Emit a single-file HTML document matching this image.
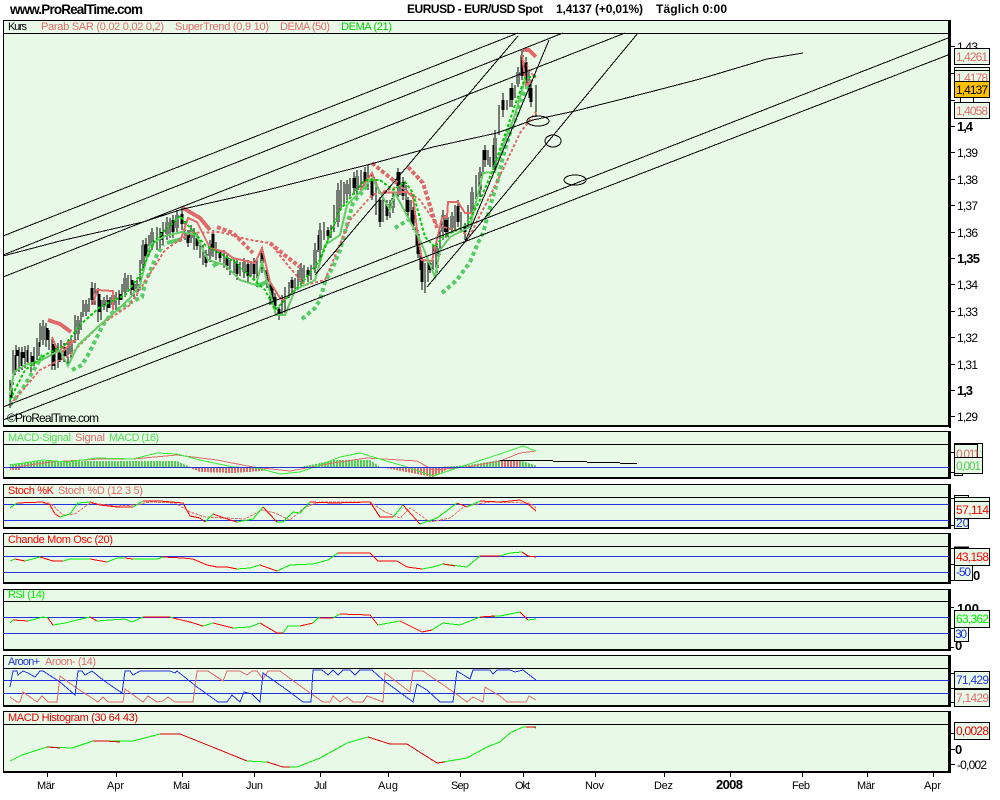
<!DOCTYPE html>
<html><head><meta charset="utf-8"><title>EURUSD</title>
<style>
html,body{margin:0;padding:0;background:#fff;width:1000px;height:800px;overflow:hidden}
svg{display:block}
text{font-family:"Liberation Sans",Arial,sans-serif;font-size:11px}
.b{font-weight:bold}
.ax{font-size:12px}
</style></head><body>
<svg width="1000" height="800" viewBox="0 0 1000 800" xmlns="http://www.w3.org/2000/svg" fill="none" shape-rendering="crispEdges">
<defs>
<pattern id="pg" width="3" height="10" patternUnits="userSpaceOnUse"><rect width="2" height="10" fill="#55cc55"/></pattern>
<pattern id="pr" width="3" height="10" patternUnits="userSpaceOnUse"><rect width="2" height="10" fill="#e06a6a"/></pattern>
</defs>
<rect width="1000" height="800" fill="#fff"/>

<!-- header -->
<g fill="#000">
<text x="10" y="14" class="b" style="font-size:13.5px" textLength="133">www.ProRealTime.com</text>
<text x="407" y="13" class="b" style="font-size:12px" textLength="136">EURUSD - EUR/USD Spot</text>
<text x="556" y="13" class="b" style="font-size:12px" textLength="87">1,4137 (+0,01%)</text>
<text x="656" y="13" class="b" style="font-size:12px" textLength="71">Täglich  0:00</text>
</g>

<!-- panels -->
<g fill="#e8f9e8" stroke="#000">
<rect x="3.5" y="20.5" width="945" height="405"/>
<rect x="3.5" y="431.5" width="945" height="46"/>
<rect x="3.5" y="484.5" width="945" height="43"/>
<rect x="3.5" y="533.5" width="945" height="49"/>
<rect x="3.5" y="589.5" width="945" height="60"/>
<rect x="3.5" y="655.5" width="945" height="50"/>
<rect x="3.5" y="711.5" width="945" height="60"/>
</g>
<g fill="#000">
<rect x="949" y="20" width="2" height="408"/><rect x="3" y="425" width="947" height="2"/>
<rect x="949" y="431" width="2" height="48"/><rect x="3" y="477" width="947" height="2"/>
<rect x="949" y="484" width="2" height="45"/><rect x="3" y="527" width="947" height="2"/>
<rect x="949" y="533" width="2" height="51"/><rect x="3" y="582" width="947" height="2"/>
<rect x="949" y="589" width="2" height="62"/><rect x="3" y="649" width="947" height="2"/>
<rect x="949" y="655" width="2" height="52"/><rect x="3" y="705" width="947" height="2"/>
<rect x="949" y="711" width="2" height="62"/><rect x="3" y="771" width="947" height="2"/>
</g>
<path stroke="#000" d="M3 33.5H949M3 444.5H949M3 497.5H949M3 546.5H949M3 601.5H949M3 668.5H949M3 724.5H949"/>

<!-- candles -->
<g>
<path stroke="#000" stroke-width="1" d="M10 380V408M13 350V385M16 345V372M19 347V372M22 347V370M25 346V368M28 345V365M31 352V372M34 347V366M37 338V360M40 323V347M43 320V345M46 323V347M49 330V350M52 337V370M55 343V370M58 343V368M61 340V360M64 343V362M68 340V367M71 336V360M75 315V343M78 316V340M81 312V330M83 300V317M86 300V316M89 298V312M92 282V305M95 283V305M98 288V322M101 300V320M104 297V310M107 295V312M110 297V308M113 290V310M116 292V310M119 290V305M122 284V300M125 273V297M128 275V292M131 275V295M134 283V297M137 280V296M140 260V290M143 240V270M146 238V262M149 235V255M152 228V250M157 227V250M160 228V248M163 222V245M167 217V240M170 218V238M173 215V238M177 210V233M182 207V230M185 222V240M188 230V247M191 225V243M194 228V250M197 233V250M200 240V258M203 245V265M206 250V267M210 240V262M213 230V257M216 242V260M220 250V262M224 250V268M227 253V270M230 258V275M234 258V275M237 260V280M240 262V276M244 258V278M248 260V282M251 262V276M254 258V280M257 257V287M262 247V273M267 267V288M270 280V305M273 288V305M275 293V310M279 307V320M282 295V315M285 287V313M289 282V298M292 277V293M295 278V292M298 270V290M301 263V287M304 265V283M308 267V282M311 265V280M315 243V273M318 235V252M320 223V260M324 222V240M328 227V240M331 225V238M334 205V232M338 183V227M341 180V208M344 182V205M347 180V200M350 178V198M354 172V195M357 170V197M361 170V190M365 167V187M368 165V190M372 173V200M376 185V215M380 197V227M383 198V222M387 200V220M390 200V218M393 193V213M398 168V197M400 172V195M403 177V200M406 185V212M408 197V217M411 200V222M413 207V230M416 222V245M418 230V258M420 240V270M422 257V290M425 263V293M428 262V282M430 260V273M433 245V270M437 243V273M440 225V255M443 210V240M446 215V238M448 217V237M452 212V232M455 205V230M458 200V227M461 212V232M465 223V240M468 205V228M472 187V217M476 175V205M480 167V197M483 150V175M485 145V167M488 150V165M490 157V167M493 145V170M495 130V173M499 105V135M503 93V117M507 100V110M510 88V107M512 83V107M515 85V98M518 67V87M522 50V80M526 57V87M529 72V98M531 83V107M536 85V117"/>
<path stroke="#000" stroke-width="3" d="M11 384V398M17 350V356M23 352V358M32 356V364M47 328V340M53 344V366M59 350V362M65 347V356M92 288V300M99 294V312M108 300V308M120 294V300M132 280V290M146 244V256M161 232V240M173 220V232M182 214V224M188 234V243M197 238V246M206 254V263M213 234V250M220 252V258M227 257V266M237 264V274M248 264V276M254 264V274M262 253V268M267 270V284M271 284V300M275 297V306M279 309V315M292 280V288M308 270V276M328 230V236M354 178V188M365 172V182M372 178V196M380 200V222M387 204V216M398 172V186M403 182V196M408 200V212M413 210V226M418 234V254M422 260V282M430 263V270M446 220V232M458 206V222M465 226V232M485 150V160M503 100V110M512 88V100M522 55V76M526 62V84M531 88V102"/>
<path stroke="#000" stroke-width="3" d="M14 355V375M20 352V366M26 350V362M38 342V356M43 326V340M71 342V354M78 320V334M86 304V312M104 300V306M113 295V305M125 278V292M137 284V292M143 245V264M152 232V246M167 222V234M177 215V228M191 230V238M210 244V256M244 262V272M301 268V282M315 250V268M320 230V250M338 190V222M347 184V194M357 176V190M393 198V208M437 248V268M443 215V232M452 216V228M472 192V212M480 172V190M495 138V165M518 72V84"/>
<path stroke="#e8f9e8" stroke-width="1" d="M14 355V375M20 352V366M26 350V362M38 342V356M43 326V340M71 342V354M78 320V334M86 304V312M104 300V306M113 295V305M125 278V292M137 284V292M143 245V264M152 232V246M167 222V234M177 215V228M191 230V238M210 244V256M244 262V272M301 268V282M315 250V268M320 230V250M338 190V222M347 184V194M357 176V190M393 198V208M437 248V268M443 215V232M452 216V228M472 192V212M480 172V190M495 138V165M518 72V84"/>

<!-- green SAR dots -->
<g stroke="#55cc66" stroke-width="4" stroke-dasharray="4 3">
<polyline points="10,405 18,395 25,385 32,373 38,363 43,355"/>
<polyline points="72,370 82,365 88,355 97,337 103,325 112,313 127,304 142,297 145,283 157,255 163,245"/>
<polyline points="167,243 182,239" stroke-dasharray="none"/>
<polyline points="213,266 218,263" stroke-dasharray="none"/>
<polyline points="257,286 267,282" stroke-dasharray="none"/>
<polyline points="302,319 315,308 320,300 325,282 333,267 340,250 353,203 368,185"/>
<polyline points="395,228 408,220"/>
<polyline points="442,293 457,280 470,262 478,243 483,233 492,200 498,180 503,157 510,133 517,115 523,96 533,77"/>
</g>
<!-- salmon SAR dots -->
<g stroke="#e06a6a" stroke-width="4" stroke-dasharray="4 2">
<polyline points="48,320 60,324 71,332" stroke-dasharray="none"/>
<polyline points="183,208 200,218 210,230" stroke-dasharray="none"/>
<polyline points="217,227 233,233 253,253"/>
<polyline points="270,243 287,257 300,267"/>
<polyline points="372,163 383,172 397,183"/>
<polyline points="408,167 423,183 435,222 437,228"/>
<polyline points="523,50 529,50 536,57" stroke-dasharray="none"/>
</g>
<!-- dema 50 dashed -->
<polyline stroke="#e06a6a" stroke-width="2" stroke-dasharray="3 2" points="10,405 40,370 70,355 100,325 130,305 165,250 190,233 220,232 250,240 270,243 290,268 305,285 325,280 350,220 372,195 400,186 420,200 437,225 470,235 497,182 520,133 536,112"/>
<polyline stroke="#e06a6a" stroke-width="1.5" stroke-dasharray="3 2" points="525,60 530,72 536,78"/>
<!-- supertrend lines -->
<polyline stroke="#e06a6a" stroke-width="2" points="52,337 58,352 68,342 74,341 62,352 55,350"/>
<polyline stroke="#e06a6a" stroke-width="2" points="93,305 97,290 113,291 113,310"/>
<polyline stroke="#e06a6a" stroke-width="2" points="180,242 188,218 197,222 210,248 225,252 233,258 255,263 262,248 270,282 280,298 285,300"/>
<polyline stroke="#e06a6a" stroke-width="2" points="360,190 372,173 380,193 407,192 413,197 418,237 422,260 432,261 442,218 447,217 448,202 458,202 465,213 473,213"/>
<polyline stroke="#e06a6a" stroke-width="2" points="522,55 526,85 533,80"/>
<!-- light green line -->
<polyline stroke="#66cc66" stroke-width="2" points="10,395 14,372 25,365 40,361 60,350 68,366 78,345 100,325 115,312 130,298 140,285 150,245 165,236 182,232 196,235 208,260 225,265 240,280 256,285 262,262 276,315 285,315 295,290 315,280 325,245 340,235 347,205 362,190 372,178 390,210 395,193 420,240 435,277 440,250 450,237 470,227 483,173 495,172 505,140 515,115 525,80"/>
<!-- dema 21 dashed -->
<polyline stroke="#00cc00" stroke-width="2" stroke-dasharray="3 2" points="10,400 25,370 45,355 65,345 80,325 100,307 125,295 140,275 155,240 180,216 205,245 235,262 265,290 275,310 300,285 320,260 340,210 365,180 380,180 393,190 405,182 413,193 425,237 435,247 443,237 467,225 480,200 493,170 505,135 515,105 525,78 536,76"/>
</g>

<!-- trend lines -->
<g stroke="#000" stroke-width="1">
<path d="M3 236L518 33M3 255L563 33M3 277L625 33"/>
<polyline points="3,256 60,241 143,222 183,209 267,190 367,165 433,147 497,133 533,120 575,111 650,92 700,79 767,59 803,53"/>
<path d="M3 407L948 38M3 420L948 55"/>
<path d="M427 287L465 242L638 33M465 242L549 40M315 275L518 36"/>
<ellipse cx="538" cy="121" rx="11" ry="5"/>
<ellipse cx="553" cy="141" rx="8" ry="6"/>
<ellipse cx="575" cy="180" rx="11" ry="5"/>
<path d="M536 117V116"/>
</g>

<!-- MACD -->
<g>
<path d="M10 467V464L43 461 133 461 177 461 190 467H300L320 463 333 460 370 460 380 467H440L470 465 500 460H520L528 463 537 466V467Z" fill="url(#pg)"/>
<path d="M190 468L200 472 233 473 262 471 267 468ZM385 468L433 477 450 468ZM10 468H20V470H10ZM500 460H520V467H500Z" fill="url(#pr)"/>
<polyline stroke="#e06a6a" points="10,468 50,462 100,459 133,459 177,455 217,460 253,467 290,471 333,463 367,458 417,461 433,470 467,467 500,461 520,453 536,451"/>
<polyline stroke="#33ee33" points="10,465 43,460 67,462 97,458 133,459 157,453 177,454 200,460 233,467 257,468 280,474 300,472 320,465 340,457 360,453 383,460 407,467 433,476 460,467 500,454 523,446 536,451"/>
</g>
<path stroke="#000" d="M500 460.5H553M553 461.5H587M587 462.5H620M620 463.5H637"/>
<path stroke="#2233dd" d="M3 467.5H949"/>

<!-- stoch -->
<path stroke="#2233dd" d="M3 504.5H949M3 520.5H949"/>
<g>
<polyline stroke="#e06a6a" stroke-dasharray="3 1" points="43,503 50,503 63,515 75,514 90,503 115,506 135,505 150,502 175,503 190,512 205,517 225,518 245,519 262,510 275,513 290,520 305,507 320,502 370,502 385,512 400,518 410,508 430,522 450,518 465,506 490,502 530,503 536,508"/>
<polyline stroke="#00ee00" points="10,508 17,503 43,502 50,505 55,514 60,517 70,514 78,503 90,502 100,505 117,507 133,507 143,501 160,501 183,503 190,516 200,518 205,522 213,514 230,520 237,522 253,519 263,507 277,522 283,522 293,512 300,513 310,502 333,503 370,502 380,517 393,517 403,505 420,524 437,518 457,503 467,507 480,501 500,502 520,500"/>
<path stroke="#ff0000" d="M17 503L43 502 50 505 55 514 60 517M90 502L100 505 117 507 133 507M143 501L160 501 183 503 190 516 200 518 205 522M213 514L230 520 237 522M263 507L277 522M310 502L333 503 370 502 380 517 393 517M403 505L420 524M457 503L467 507M480 501L500 502 520 500 528 504 536 511"/>
</g>

<!-- chande -->
<path stroke="#2233dd" d="M3 556.5H949M3 572.5H949"/>
<g>
<polyline stroke="#00ee00" points="10,561 15,559 25,561 40,557 53,561 63,561 70,559 90,559 107,562 117,558 125,558 133,559 157,559 163,557 183,558 193,559 207,565 217,567 227,567 237,569 250,568 260,565 277,571 290,565 313,564 328,560 338,553 370,553 378,561 397,561 407,567 422,569 433,567 443,564 467,567 480,556 500,556 510,553 522,552"/>
<path stroke="#ff0000" d="M15 559L25 561M40 557L53 561 63 561M90 559L107 562M125 558L133 559M163 557L183 558 193 559 207 565 217 567 227 567 237 569M260 565L277 571M338 553L370 553 378 561 397 561 407 567 422 569M443 564L455 566M480 556H500M522 552L528 556 536 557"/>
</g>

<!-- rsi -->
<path stroke="#2233dd" d="M3 617.5H949M3 633.5H949"/>
<g>
<polyline stroke="#00ee00" points="10,623 13,620 28,621 43,617 48,618 53,625 65,623 77,620 90,617 97,621 110,620 125,619 132,622 143,617 170,617 173,618 190,622 203,626 213,623 233,628 250,627 260,623 277,633 283,633 288,626 300,626 313,623 318,618 333,618 340,614 370,615 378,625 400,621 422,632 432,630 443,623 460,625 480,617 500,616 510,614 520,612 528,620 536,619"/>
<path stroke="#ff0000" d="M13 620L28 621M48 618L53 625M90 617L97 621M143 617L170 617M173 618L190 622 203 626M213 623L233 628M260 623L277 633 283 633M300 626L313 623M320 618H333M340 614L370 615 378 625M400 621L422 632 432 630M480 617L495 616M520 612L528 620"/>
</g>

<!-- aroon -->
<path stroke="#2233dd" d="M3 680.5H949M3 693.5H949"/>
<g>
<polyline stroke="#e06a6a" points="10,697 17,702 20,702 23,692 37,702 42,696 48,702 57,702 60,676 75,687 98,702 103,697 108,702 123,702 125,689 143,702 148,696 157,702 163,701 168,697 175,702 193,702 197,671 208,671 223,681 227,671 240,671 247,675 252,671 257,671 263,679 268,671 280,671 310,693 323,702 330,702 333,696 340,702 347,697 353,702 363,702 367,696 383,702 385,673 410,692 413,671 423,671 455,693 467,702 473,697 483,702 485,687 500,696 507,702 526,702 529,696 536,700"/>
<polyline stroke="#2233dd" points="10,687 13,671 17,671 18,675 23,671 28,673 35,677 40,671 43,671 60,682 75,695 78,671 82,671 85,675 92,671 103,680 122,693 125,671 130,671 133,675 140,671 170,671 175,673 177,671 197,687 218,702 227,702 232,695 240,702 244,692 252,694 260,702 263,673 287,690 303,702 311,702 313,670 322,670 328,675 333,670 338,675 343,670 350,670 355,675 360,670 372,670 383,680 413,702 417,684 427,690 440,702 453,702 457,671 470,679 473,670 490,670 493,674 497,670 510,670 515,672 523,670 536,680"/>
</g>

<!-- macd hist -->
<polyline stroke="#00ee00" points="10,761 22,755 47,747 72,748 93,741 133,741 160,734 180,734 210,746 247,761 267,762 283,767 297,767 320,758 347,743 368,737 390,744 407,744 437,763 467,758 487,747 500,742 510,733 523,727 533,727 536,728"/>
<path stroke="#dd0000" d="M47 747L60 748M93 741L105 741 120 742M160 734L180 734 210 746 247 761M267 762L283 767 290 767M368 737L390 744 407 744 437 763 445 762M526 727H536"/>

<!-- title labels -->
<g style="font-size:11px">
<text x="8" y="30" fill="#000" textLength="19">Kurs</text>
<text x="41" y="30" fill="#e06a6a" textLength="123">Parab SAR (0,02 0,02 0,2)</text>
<text x="175" y="30" fill="#e06a6a" textLength="94">SuperTrend (0,9 10)</text>
<text x="280" y="30" fill="#e06a6a" textLength="50">DEMA (50)</text>
<text x="341" y="30" fill="#00cc00" textLength="51">DEMA (21)</text>
<text x="7" y="422" fill="#000" style="font-size:12px" textLength="92">©ProRealTime.com</text>
<text x="8" y="441" fill="#55dd55" textLength="63">MACD-Signal</text>
<text x="75" y="441" fill="#e06a6a" textLength="30">Signal</text>
<text x="109" y="441" fill="#55dd55" textLength="50">MACD (16)</text>
<text x="8" y="494" fill="#ff0000" textLength="46">Stoch %K</text>
<text x="58" y="494" fill="#e06a6a" textLength="85">Stoch %D (12 3 5)</text>
<text x="8" y="543" fill="#ff0000" textLength="105">Chande Mom Osc (20)</text>
<text x="8" y="598" fill="#00ee00" textLength="37">RSI (14)</text>
<text x="8" y="665" fill="#2233dd" textLength="32">Aroon+</text>
<text x="45" y="665" fill="#e06a6a" textLength="51">Aroon- (14)</text>
<text x="8" y="721" fill="#dd0000" textLength="130">MACD Histogram (30 64 43)</text>
</g>

<!-- price axis -->
<path stroke="#000" d="M950 46.5H955M950 73.5H955M950 100.5H955M950 126.5H955M950 152.5H955M950 179.5H955M950 205.5H955M950 232.5H955M950 258.5H955M950 284.5H955M950 311.5H955M950 337.5H955M950 364.5H955M950 390.5H955M950 416.5H955"/>
<g fill="#000" class="ax">
<text x="957" y="51" class="ax" fill="#000" textLength="21">1,43</text>
<text x="957" y="131" class="b" fill="#000" style="font-size:13px" textLength="16">1,4</text>
<text x="957" y="157" class="ax" fill="#000" textLength="21">1,39</text>
<text x="957" y="184" class="ax" fill="#000" textLength="21">1,38</text>
<text x="957" y="210" class="ax" fill="#000" textLength="21">1,37</text>
<text x="957" y="237" class="ax" fill="#000" textLength="21">1,36</text>
<text x="957" y="263" class="b" fill="#000" style="font-size:13px" textLength="23">1,35</text>
<text x="957" y="289" class="ax" fill="#000" textLength="21">1,34</text>
<text x="957" y="316" class="ax" fill="#000" textLength="21">1,33</text>
<text x="957" y="342" class="ax" fill="#000" textLength="21">1,32</text>
<text x="957" y="369" class="ax" fill="#000" textLength="21">1,31</text>
<text x="957" y="395" class="b" fill="#000" style="font-size:13px" textLength="16">1,3</text>
<text x="957" y="421" class="ax" fill="#000" textLength="21">1,29</text>
</g>
<g stroke="#000" fill="#e8f9e8">
<rect x="954.5" y="48.5" width="35" height="16"/>
<rect x="954.5" y="67.5" width="35" height="15"/>
<path d="M954.5 70.5H989.5M960.5 98V102M973.5 98V102" />
<rect x="954.5" y="81.5" width="35" height="16" fill="#ffc000"/>
<rect x="954.5" y="102.5" width="35" height="16"/>
</g>
<text x="956" y="61" fill="#e06a6a" style="font-size:12px" textLength="32">1,4261</text>
<svg x="955" y="71" width="34" height="10"><text x="1" y="11" fill="#e06a6a" style="font-size:12px" textLength="32">1,4178</text></svg>
<text x="956" y="94" fill="#000" style="font-size:12px" textLength="32">1,4137</text>
<text x="956" y="115" fill="#e06a6a" style="font-size:12px" textLength="32">1,4058</text>

<!-- sub axis ticks -->
<path stroke="#000" d="M950 452.5H954M950 472.5H954M950 498.5H954M950 525.5H954M950 548.5H954M950 564.5H954M950 580.5H954M950 607.5H954M950 628.5H954M950 647.5H954M950 673.5H954M950 688.5H954M950 702.5H954M950 733.5H954M950 749.5H955M950 764.5H955"/>
<!-- MACD boxes -->
<g stroke="#000" fill="#e8f9e8">
<rect x="954.5" y="472.5" width="8" height="3"/>
<rect x="954.5" y="443.5" width="28" height="14"/>
<path d="M954.5 444H978" stroke-width="2"/>
<path d="M977.5 444V457"/>
<rect x="954.5" y="457.5" width="28" height="16"/>
</g>
<svg x="955" y="444" width="26" height="13"><text x="1" y="14" fill="#e06a6a" style="font-size:12px" textLength="24">0,011</text><text x="24" y="14" fill="#00ee00" style="font-size:12px">1</text></svg>
<text x="956" y="470" fill="#55cc55" style="font-size:12px" textLength="25">0,001</text>
<!-- Stoch boxes -->
<g stroke="#000" fill="#e8f9e8">
<rect x="954.5" y="495.5" width="14" height="5"/>
<rect x="954.5" y="518.5" width="14" height="10"/>
<rect x="954.5" y="497.5" width="35" height="4"/>
<rect x="954.5" y="501.5" width="35" height="17"/>
</g>
<svg x="955" y="519" width="13" height="9"><text x="1" y="8" fill="#2233dd" style="font-size:12px">20</text></svg>
<text x="956" y="514" fill="#ff0000" style="font-size:12px" textLength="33">57,114</text>
<!-- Chande -->
<g stroke="#000" fill="#e8f9e8">
<path d="M954 547.5H969" stroke-width="2"/>
<rect x="954.5" y="548.5" width="35" height="17"/>
<rect x="954.5" y="565.5" width="18" height="15"/>
</g>
<text x="956" y="561" fill="#ff0000" style="font-size:12px" textLength="33">43,158</text>
<text x="956" y="576" fill="#2233dd" style="font-size:12px" textLength="15">-50</text>
<text x="973" y="580" fill="#000" class="b" style="font-size:13px">0</text>
<!-- RSI -->
<text x="957" y="613" fill="#000" class="b" style="font-size:13px" textLength="22">100</text>
<text x="955" y="650" fill="#000" class="b" style="font-size:13px">0</text>
<g stroke="#000" fill="#e8f9e8">
<rect x="954.5" y="610.5" width="35" height="17"/>
<rect x="954.5" y="627.5" width="14" height="14"/>
</g>
<text x="956" y="623" fill="#00ee00" style="font-size:12px" textLength="33">63,362</text>
<text x="955" y="638" fill="#2233dd" style="font-size:12px" textLength="12">30</text>
<!-- Aroon -->
<text x="957" y="680" fill="#000" class="b" style="font-size:13px" textLength="22">100</text>
<g stroke="#000" fill="#e8f9e8">
<rect x="954.5" y="671.5" width="35" height="17"/>
<rect x="954.5" y="689.5" width="35" height="17"/>
<path d="M954 689H990" stroke-width="2"/>
</g>
<text x="956" y="684" fill="#2233dd" style="font-size:12px" textLength="33">71,429</text>
<text x="956" y="702" fill="#e06a6a" style="font-size:12px" textLength="33">7,1429</text>
<!-- Hist -->
<g stroke="#000" fill="#e8f9e8"><rect x="954.5" y="722.5" width="35" height="17"/></g>
<text x="956" y="735" fill="#dd0000" style="font-size:12px" textLength="33">0,0028</text>
<text x="955" y="754" fill="#000" class="b" style="font-size:13px">0</text>
<text x="957" y="769" fill="#000" style="font-size:12px" textLength="30">-0,002</text>

<!-- time axis -->
<path stroke="#000" d="M47.5 773V777M116.5 773V777M182.5 773V777M254.5 773V777M320.5 773V777M388.5 773V777M460.5 773V777M523.5 773V777M595.5 773V777M664.5 773V777M730.5 773V777M802.5 773V777M867.5 773V777M933.5 773V777"/>
<g fill="#000" style="font-size:12px">
<text x="37" y="789" textLength="18">Mär</text>
<text x="107" y="789" textLength="17">Apr</text>
<text x="173" y="789" textLength="17">Mai</text>
<text x="246" y="789" textLength="17">Jun</text>
<text x="314" y="789" textLength="13">Jul</text>
<text x="378" y="789" textLength="20">Aug</text>
<text x="451" y="789" textLength="18">Sep</text>
<text x="515" y="789" textLength="15">Okt</text>
<text x="585" y="789" textLength="19">Nov</text>
<text x="654" y="789" textLength="19">Dez</text>
<text x="716" y="789" class="b" style="font-size:13px" textLength="27">2008</text>
<text x="792" y="789" textLength="18">Feb</text>
<text x="857" y="789" textLength="18">Mär</text>
<text x="924" y="789" textLength="17">Apr</text>
</g>
</svg>
</body></html>
